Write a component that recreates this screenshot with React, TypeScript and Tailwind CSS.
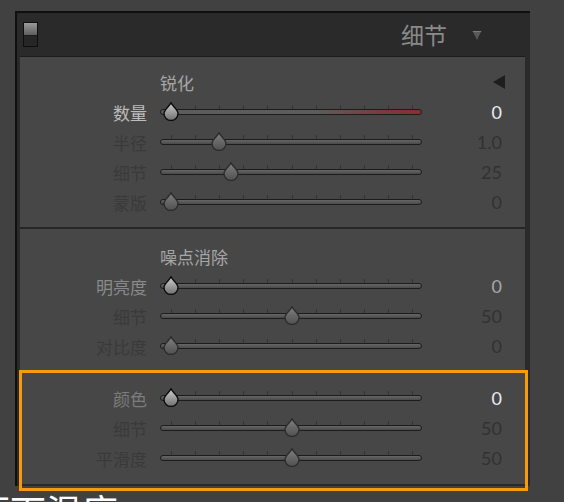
import React from "react";

type Row = {
  label: string;
  frac: number;
  value: string;
  active: boolean;
  labelColor: string;
  valueColor: string;
  red?: boolean;
};

const FONT_CJK = { fontFamily: '"Noto Sans CJK SC", "Noto Sans", sans-serif' };
const FONT_NUM = { fontFamily: 'Lato, "Open Sans", sans-serif' };

function Thumb({ active }: { active: boolean }) {
  const id = active ? "thumbA" : "thumbI";
  return (
    <svg width="16" height="19" viewBox="0 0 16 19">
      <defs>
        <linearGradient id={id} x1="0" y1="0" x2="0" y2="1">
          <stop offset="0" stopColor={active ? "#d0d0d0" : "#808080"} />
          <stop offset="1" stopColor={active ? "#6e6e6e" : "#505050"} />
        </linearGradient>
      </defs>
      <path
        d="M8 0.8 C 9 4, 15 7.5, 15 11.5 A 7 7 0 0 1 1 11.5 C 1 7.5, 7 4, 8 0.8 Z"
        fill={`url(#${id})`}
        stroke={active ? "#0c0c0c" : "#2c2c2c"}
        strokeWidth="1.4"
      />
    </svg>
  );
}

function Slider({ row }: { row: Row }) {
  const ticks = Array.from({ length: 11 }, (_, i) => 11 + i * 24.1);
  const center = 11 + row.frac * 241;
  return (
    <div className="relative w-[262px] h-[30px] flex items-center">
      <div
        className="w-full h-[6px] rounded-full border border-[#1c1c1c]"
        style={{
          background: row.red
            ? "linear-gradient(to right, #5c5c5c 0%, #5c5c5c 60%, #7a3a3e 85%, #8e2c33 100%)"
            : "linear-gradient(to bottom, #666666, #4a4a4a)",
        }}
      />
      {ticks.map((x, i) => (
        <div
          key={i}
          className="absolute top-[8px] w-px h-[4px] bg-[#353535]"
          style={{ left: x }}
        />
      ))}
      <div className="absolute top-[5px]" style={{ left: center - 8 }}>
        <Thumb active={row.active} />
      </div>
    </div>
  );
}

function SliderRow({ row }: { row: Row }) {
  return (
    <div className="flex items-center h-[30px]">
      <div
        className="w-[127px] text-right text-[17px] leading-none"
        style={{ ...FONT_CJK, color: row.labelColor }}
      >
        {row.label}
      </div>
      <div className="ml-[13px]">
        <Slider row={row} />
      </div>
      <div
        className="w-[80px] text-right text-[18px] leading-none"
        style={{ ...FONT_NUM, color: row.valueColor }}
      >
        {row.value}
      </div>
    </div>
  );
}

const DIM_L = "#3a3a3a";
const DIM_V = "#323232";

const sharpen: Row[] = [
  { label: "数量", frac: 0, value: "0", active: true, labelColor: "#bcbcbc", valueColor: "#ececf2", red: true },
  { label: "半径", frac: 0.2, value: "1.0", active: false, labelColor: DIM_L, valueColor: DIM_V },
  { label: "细节", frac: 0.25, value: "25", active: false, labelColor: DIM_L, valueColor: DIM_V },
  { label: "蒙版", frac: 0, value: "0", active: false, labelColor: DIM_L, valueColor: DIM_V },
];

const noise: Row[] = [
  { label: "明亮度", frac: 0, value: "0", active: true, labelColor: "#8a8a8a", valueColor: "#a8a8a8" },
  { label: "细节", frac: 0.5, value: "50", active: false, labelColor: DIM_L, valueColor: DIM_V },
  { label: "对比度", frac: 0, value: "0", active: false, labelColor: DIM_L, valueColor: DIM_V },
];

const color: Row[] = [
  { label: "颜色", frac: 0, value: "0", active: true, labelColor: "#7c7c7c", valueColor: "#ececf2" },
  { label: "细节", frac: 0.5, value: "50", active: false, labelColor: DIM_L, valueColor: DIM_V },
  { label: "平滑度", frac: 0.5, value: "50", active: false, labelColor: DIM_L, valueColor: DIM_V },
];

export default function App() {
  return (
    <div className="relative w-[564px] h-[502px] overflow-hidden bg-[#414141]">
      <div className="pl-[15px] pt-[11px]">
        <div className="w-[515px] bg-[#2a2a2a] border-l-2 border-t-2 border-[#0f0f0f] pb-[2px]">
          {/* header */}
          <div className="h-[43px] flex items-center pl-[6px] pr-[48px]">
            <div className="w-[15px] h-[25px] border border-[#0e0e0e] flex flex-col">
              <div className="h-1/2 bg-gradient-to-b from-[#9a9a9a] to-[#5e5e5e]" />
              <div className="h-1/2 bg-[#262626] border-t border-[#1a1a1a]" />
            </div>
            <div className="flex-1" />
            <div className="text-[23px] leading-none text-[#8a8a8a]" style={FONT_CJK}>
              细节
            </div>
            <svg className="ml-[25px]" width="10" height="10" viewBox="0 0 10 10">
              <path d="M0.5 1 H9.5 L5 9.5 Z" fill="#7a7a7a" />
              <path d="M1 3 H9 M2 5 H8 M3 7 H7" stroke="#2a2a2a" strokeWidth="0.8" />
            </svg>
          </div>
          {/* content */}
          <div className="ml-[3px] mr-[5px] bg-[#474747] border-t border-[#1c1c1c]">
            <div className="pt-[10px] pb-[10px] border-b-2 border-[#262626]">
              <div className="h-[30px] flex items-center">
                <div className="ml-[140px] text-[17px] leading-none text-[#a6a6a6]" style={FONT_CJK}>
                  锐化
                </div>
                <div className="flex-1" />
                <svg className="mr-[20px]" width="12" height="14" viewBox="0 0 12 14">
                  <path d="M12 0 V14 L0 7 Z" fill="#1e1e1e" />
                </svg>
              </div>
              {sharpen.map((r, i) => (
                <SliderRow key={i} row={r} />
              ))}
            </div>
            <div className="pt-[12px] pb-[11px]">
              <div className="h-[30px] flex items-center">
                <div className="ml-[140px] text-[17px] leading-none text-[#a6a6a6]" style={FONT_CJK}>
                  噪点消除
                </div>
              </div>
              {noise.map((r, i) => (
                <SliderRow key={i} row={r} />
              ))}
              <div className="mt-[22px]">
                {color.map((r, i) => (
                  <SliderRow key={i} row={r} />
                ))}
              </div>
            </div>
          </div>
        </div>
      </div>
      <div
        className="-ml-[26px] mt-[6px] text-[36px] leading-none text-white whitespace-nowrap"
        style={FONT_CJK}
      >
        面下温度
      </div>
      {/* highlight box */}
      <div className="absolute left-[19px] top-[370px] w-[509px] h-[121px] border-[3px] border-[#f79a0c]" />
    </div>
  );
}
